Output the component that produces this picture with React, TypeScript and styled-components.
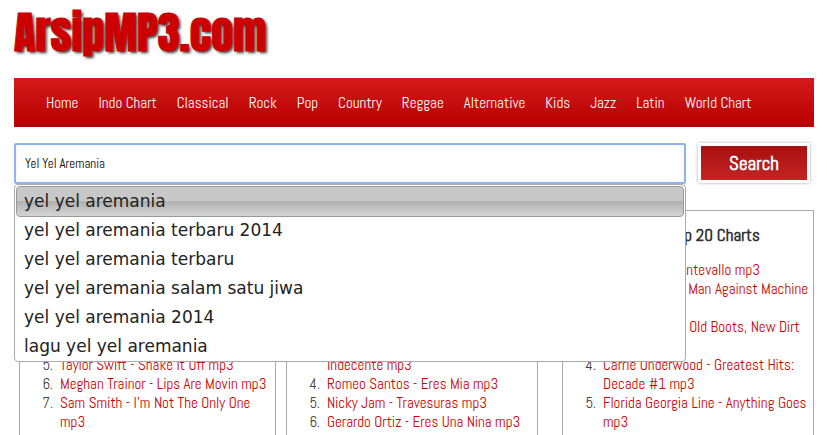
import React from "react";
import styled, { createGlobalStyle } from "styled-components";

const GlobalStyle = createGlobalStyle`
  *, *::before, *::after { box-sizing: border-box; }
  body {
    margin: 0;
    background: #fff;
    color: #333;
    font-family: Abel, "Roboto Condensed", "Liberation Sans", sans-serif;
    font-size: 15px;
    line-height: 19px;
  }
`;

const Page = styled.div`
  height: 100vh;
  overflow: hidden;
  padding: 4px 13px 0 14px;
`;

const Logo = styled.a`
  display: block;
  height: 74px;
  color: #c00;
  font-family: Impact, Anton, "Roboto Condensed", sans-serif;
  font-size: 44px;
  font-weight: 400;
  line-height: 56px;
  text-decoration: none;
  text-shadow: 2px 2px 3px rgba(0, 0, 0, 0.8);
  -webkit-text-stroke: 1px #c00;
`;

const Nav = styled.nav`
  display: flex;
  align-items: center;
  gap: 20px;
  height: 49px;
  padding: 0 32px;
  background: linear-gradient(#d41a1a, #b80000);
`;

const NavLink = styled.a`
  color: #fff;
  text-decoration: none;
  white-space: nowrap;
`;

const SearchForm = styled.form`
  display: flex;
  align-items: flex-start;
  gap: 12px;
  margin-top: 16px;
  padding-right: 4px;
`;

const SearchField = styled.div`
  position: relative;
  flex: 1;
`;

const SearchInput = styled.input`
  display: block;
  width: 100%;
  height: 41px;
  padding: 0 9px;
  border: 2px solid #8fb3ee;
  border-radius: 2px;
  outline: none;
  background: #fff;
  box-shadow: inset 0 0 4px #eee;
  color: #000;
  font: 13px Abel, "Roboto Condensed", sans-serif;
`;

const SearchButton = styled.button`
  width: 112px;
  height: 40px;
  padding: 0;
  border: 3px solid #fff;
  background: linear-gradient(#a80f0f, #c42424) padding-box;
  box-shadow: 0 0 3px #aaa;
  color: #fff;
  font: bold 19px Abel, "Roboto Condensed", sans-serif;
`;

const Suggestions = styled.ul`
  position: absolute;
  z-index: 1;
  top: 100%;
  left: 0;
  right: 0;
  margin: 0;
  padding: 1px 1px 0;
  border: 1px solid #aaa;
  border-radius: 4px;
  background: #fff;
  list-style: none;
`;

const Suggestion = styled.li<{ $active: boolean }>`
  height: ${(p) => (p.$active ? 31 : 29)}px;
  margin-bottom: ${(p) => (p.$active ? -1 : 0)}px;
  padding: 0 ${(p) => (p.$active ? 7 : 8)}px;
  border: ${(p) => (p.$active ? "1px solid #999" : "none")};
  border-radius: 4px;
  background: ${(p) =>
    p.$active ? "linear-gradient(#c8c8c8 48%, #b0b0b0 48%, #d4d4d4)" : "none"};
  color: #222;
  font-family: Verdana, "DejaVu Sans", sans-serif;
  font-size: 17px;
  line-height: 29px;
  white-space: nowrap;
`;

const Charts = styled.main`
  display: grid;
  grid-template-columns: 257fr 262fr 276fr;
  margin: 26px 0 0 5px;
`;

const ChartCard = styled.section<{ $before: number }>`
  height: 400px;
  margin-left: ${(p) => p.$before}px;
  border: 1px solid #aaa;
`;

const ChartTitle = styled.h2`
  margin: 15px 0;
  color: #333;
  font-size: 17px;
  line-height: 19px;
  text-align: center;
`;

const ChartList = styled.ol`
  margin: 0;
  padding-left: 40px;
`;

const ChartItem = styled.li`
  color: #444;

  &::marker {
    content: counter(list-item) ".\\00a0\\00a0";
  }
`;

const SongLink = styled.a`
  color: #c00;
  text-decoration: none;
`;

const genres = [
  "Home", "Indo Chart", "Classical", "Rock", "Pop", "Country",
  "Reggae", "Alternative", "Kids", "Jazz", "Latin", "World Chart",
];

const suggestions = [
  "yel yel aremania",
  "yel yel aremania terbaru 2014",
  "yel yel aremania terbaru",
  "yel yel aremania salam satu jiwa",
  "yel yel aremania 2014",
  "lagu yel yel aremania",
];

const charts = [
  {
    title: "Pop Top 20 Charts",
    before: 0,
    songs: [
      "Mark Ronson - Uptown Funk! mp3",
      "Ed Sheeran - Thinking Out Loud Live Version mp3",
      "Hozier - Take Me To Church mp3",
      "Taylor Swift - Blank Space mp3",
      "Taylor Swift - Shake It Off mp3",
      "Meghan Trainor - Lips Are Movin mp3",
      "Sam Smith - I'm Not The Only One mp3",
    ],
  },
  {
    title: "Latin Top 20 Charts",
    before: 10,
    songs: [
      "Enrique Iglesias - Bailando Spanish Version mp3",
      "J Balvin - Ay Vamos Official Single Version mp3",
      "Prince Royce - Soy El Mismo Indecente mp3",
      "Romeo Santos - Eres Mia mp3",
      "Nicky Jam - Travesuras mp3",
      "Gerardo Ortiz - Eres Una Nina mp3",
    ],
  },
  {
    title: "Country Top 20 Charts",
    before: 24,
    songs: [
      "Sam Hunt - Montevallo mp3",
      "Garth Brooks - Man Against Machine mp3",
      "Jason Aldean - Old Boots, New Dirt mp3",
      "Carrie Underwood - Greatest Hits: Decade #1 mp3",
      "Florida Georgia Line - Anything Goes mp3",
    ],
  },
];

export default function App() {
  return (
    <>
      <GlobalStyle />
      <Page>
        <Logo href="#">ArsipMP3.com</Logo>
        <Nav>
          {genres.map((g) => (
            <NavLink key={g} href="#">{g}</NavLink>
          ))}
        </Nav>
        <SearchForm onSubmit={(e) => e.preventDefault()}>
          <SearchField>
            <SearchInput aria-label="Search songs" defaultValue="Yel Yel Aremania" />
            <Suggestions>
              {suggestions.map((s, i) => (
                <Suggestion key={s} $active={i === 0}>{s}</Suggestion>
              ))}
            </Suggestions>
          </SearchField>
          <SearchButton type="submit">Search</SearchButton>
        </SearchForm>
        <Charts>
          {charts.map((c) => (
            <ChartCard key={c.title} $before={c.before}>
              <ChartTitle>{c.title}</ChartTitle>
              <ChartList>
                {c.songs.map((s) => (
                  <ChartItem key={s}><SongLink href="#">{s}</SongLink></ChartItem>
                ))}
              </ChartList>
            </ChartCard>
          ))}
        </Charts>
      </Page>
    </>
  );
}
